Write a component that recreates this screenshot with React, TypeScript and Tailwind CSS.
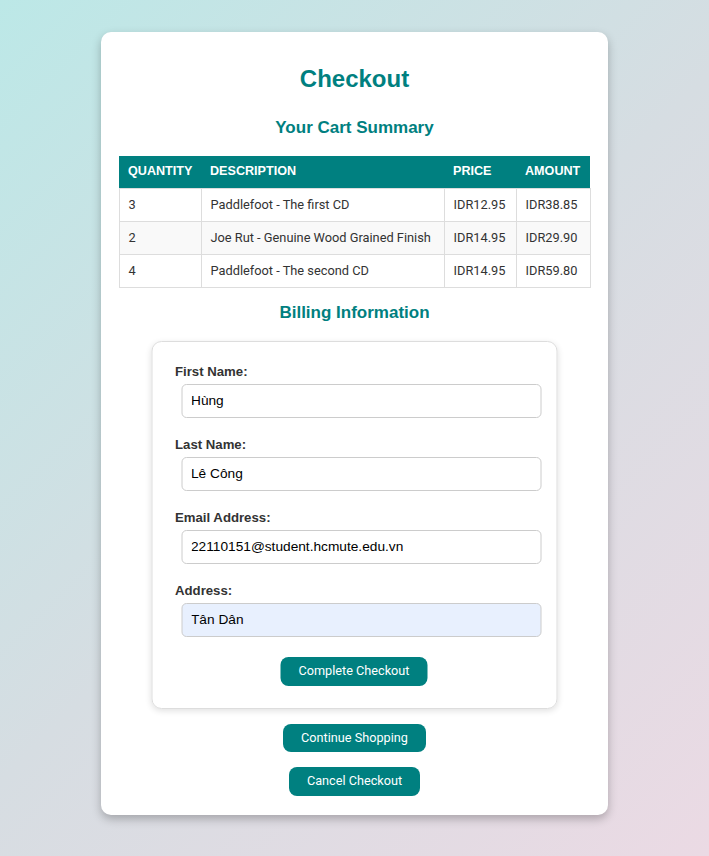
import React from "react";

const rows = [
  { q: "3", d: "Paddlefoot - The first CD", p: "IDR12.95", a: "IDR38.85" },
  { q: "2", d: "Joe Rut - Genuine Wood Grained Finish", p: "IDR14.95", a: "IDR29.90" },
  { q: "4", d: "Paddlefoot - The second CD", p: "IDR14.95", a: "IDR59.80" },
];

const fields = [
  { label: "First Name:", value: "Hùng", auto: false },
  { label: "Last Name:", value: "Lê Công", auto: false },
  { label: "Email Address:", value: "22110151@student.hcmute.edu.vn", auto: false },
  { label: "Address:", value: "Tân Dân", auto: true },
];

export default function App() {
  return (
    <div
      className="w-full min-h-[856px] bg-[linear-gradient(135deg,#bce8e7_0%,#d6dde2_50%,#ebdae4_100%)] pt-[32px] pb-[41px]"
      style={{ fontFamily: '"Liberation Sans", Arial, sans-serif' }}
    >
      <div className="mx-auto w-[507px] bg-white rounded-[10px] shadow-[0_4px_10px_rgba(0,0,0,0.25)] px-[18px] pt-[33px] pb-[19px] flex flex-col items-center">
        <h1 className="text-[24px] leading-[28px] font-bold text-[#008080]">Checkout</h1>
        <h2 className="mt-[25px] text-[17px] leading-[20px] font-bold text-[#008080]">Your Cart Summary</h2>
        <table className="mt-[18px] w-[471px] border-collapse table-fixed">
          <colgroup>
            <col className="w-[82px]" />
            <col className="w-[243px]" />
            <col className="w-[72px]" />
            <col className="w-[74px]" />
          </colgroup>
          <thead>
            <tr className="bg-[#008080] text-white h-[32px]">
              <th className="text-left font-bold px-[9px] uppercase text-[12.6px] whitespace-nowrap">Quantity</th>
              <th className="text-left font-bold px-[9px] uppercase text-[12.6px] whitespace-nowrap">Description</th>
              <th className="text-left font-bold px-[9px] uppercase text-[12.6px] whitespace-nowrap">Price</th>
              <th className="text-left font-bold px-[9px] uppercase text-[12.6px] whitespace-nowrap">Amount</th>
            </tr>
          </thead>
          <tbody className="text-[#333] text-[12.8px]" style={{ fontFamily: "Roboto, sans-serif" }}>
            {rows.map((r, i) => (
              <tr key={i} className={`h-[33px] ${i === 1 ? "bg-[#f9f9f9]" : "bg-white"}`}>
                <td className="border border-[#ddd] px-[9px] whitespace-nowrap">{r.q}</td>
                <td className="border border-[#ddd] px-[9px] whitespace-nowrap">{r.d}</td>
                <td className="border border-[#ddd] px-[9px] whitespace-nowrap">{r.p}</td>
                <td className="border border-[#ddd] px-[9px] whitespace-nowrap">{r.a}</td>
              </tr>
            ))}
          </tbody>
        </table>
        <h2 className="mt-[15px] text-[17px] leading-[20px] font-bold text-[#008080]">Billing Information</h2>
        <div className="mt-[18px] w-[406px] -translate-x-[0.5px] border border-[#ddd] rounded-[10px] shadow-[0_2px_6px_rgba(0,0,0,0.12)] pt-[22px] pb-[22px] pl-[23px] flex flex-col">
          {fields.map((f, i) => (
            <div key={i} className={`flex flex-col ${i > 0 ? "mt-[19px]" : ""}`}>
              <label className="text-[13.2px] leading-[16px] font-bold text-[#333]">{f.label}</label>
              <input
                readOnly
                value={f.value}
                className={`mt-[4px] ml-[6px] w-[360px] h-[34px] border border-[#ccc] rounded-[5px] px-[9px] text-[13.7px] text-black outline-none ${f.auto ? "bg-[#e8f0fe]" : "bg-white"}`}
                style={{ fontFamily: '"Liberation Sans", Arial, sans-serif' }}
              />
            </div>
          ))}
          <div className="mt-[20px] flex justify-center pr-[23px]">
            <button
              className="h-[29px] w-[147px] bg-[#008080] text-white text-[12.7px] rounded-[8px]"
              style={{ fontFamily: "Roboto, sans-serif" }}
            >
              Complete Checkout
            </button>
          </div>
        </div>
        <button
          className="mt-[15px] h-[28px] w-[143px] bg-[#008080] text-white text-[12.7px] rounded-[8px]"
          style={{ fontFamily: "Roboto, sans-serif" }}
        >
          Continue Shopping
        </button>
        <button
          className="mt-[15px] h-[29px] w-[131px] bg-[#008080] text-white text-[12.7px] rounded-[8px]"
          style={{ fontFamily: "Roboto, sans-serif" }}
        >
          Cancel Checkout
        </button>
      </div>
    </div>
  );
}
